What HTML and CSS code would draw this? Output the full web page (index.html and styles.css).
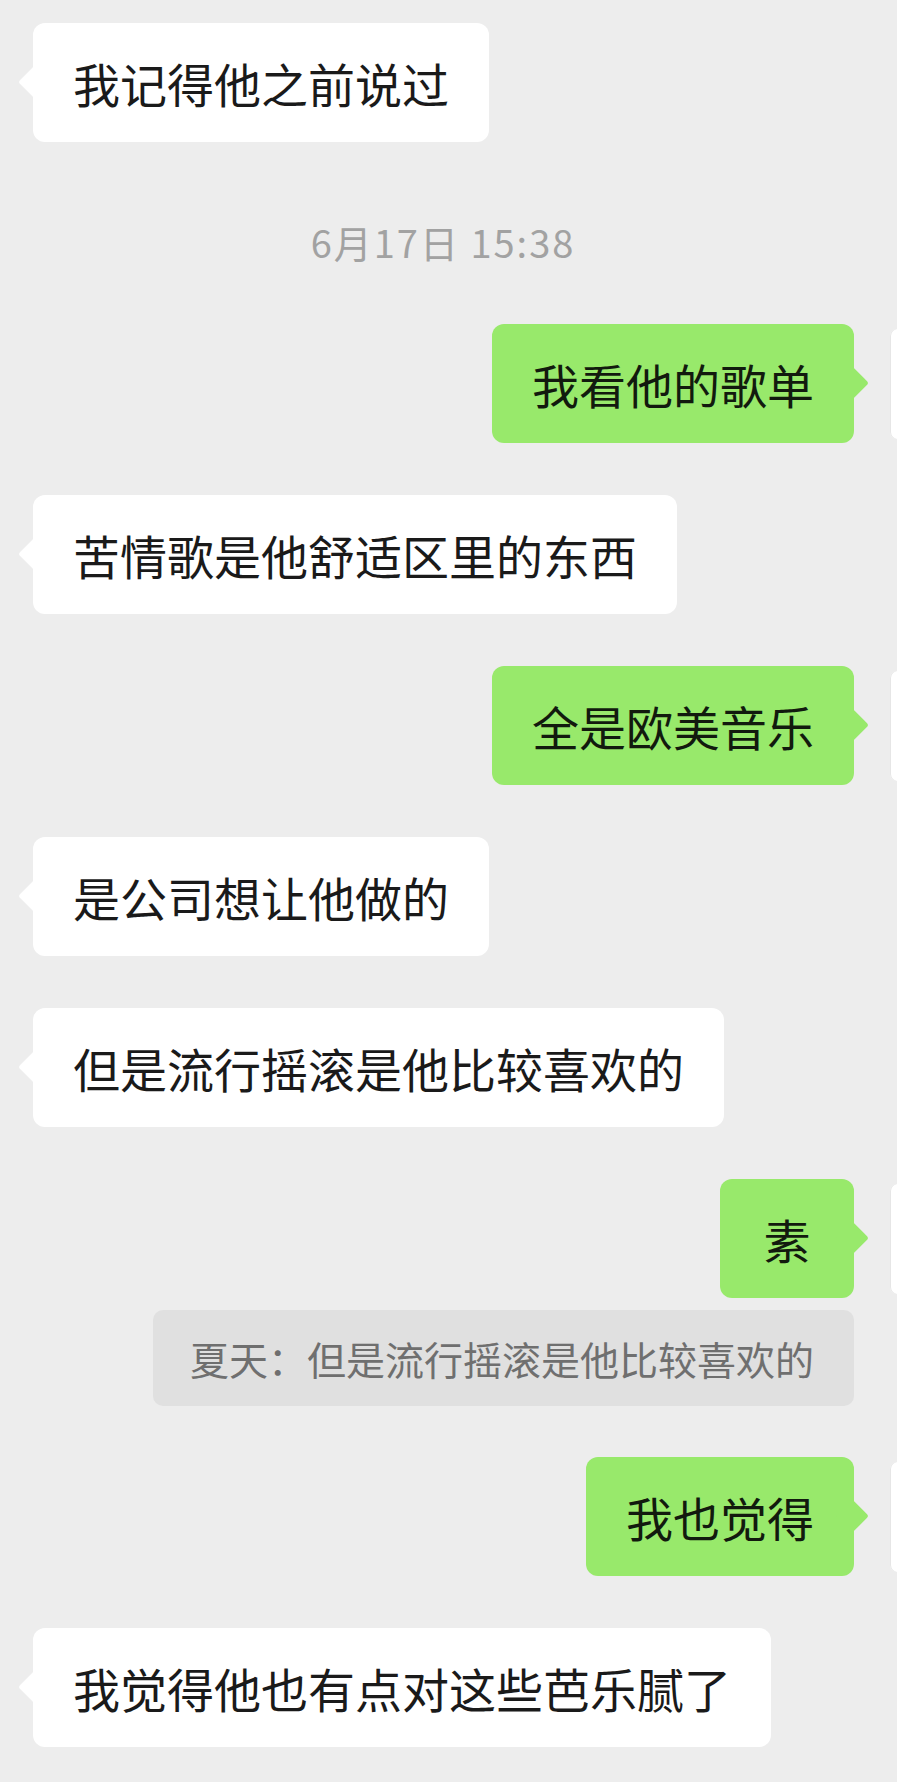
FILE: index.html
```html
<!DOCTYPE html>
<html lang="zh-CN">
<head>
  <meta charset="UTF-8">
  <meta name="viewport" content="width=device-width, initial-scale=1.0">
  <title>聊天记录</title>
  <link rel="stylesheet" href="styles.css">
</head>
<body>

  <div class="chat">
    <div class="row other">
      <div class="bubble">我记得他之前说过</div>
    </div>

    <div class="time">6月17日 15:38</div>

    <div class="row me">
      <div class="bubble">我看他的歌单</div>
      <div class="avatar"></div>
    </div>

    <div class="row other">
      <div class="bubble">苦情歌是他舒适区里的东西</div>
    </div>

    <div class="row me">
      <div class="bubble">全是欧美音乐</div>
      <div class="avatar"></div>
    </div>

    <div class="row other">
      <div class="bubble">是公司想让他做的</div>
    </div>

    <div class="row other">
      <div class="bubble">但是流行摇滚是他比较喜欢的</div>
    </div>

    <div class="row me">
      <div class="bubble">素</div>
      <div class="avatar"></div>
    </div>

    <div class="quote-row">
      <div class="quote">夏天：但是流行摇滚是他比较喜欢的</div>
    </div>

    <div class="row me">
      <div class="bubble">我也觉得</div>
      <div class="avatar"></div>
    </div>

    <div class="row other">
      <div class="bubble">我觉得他也有点对这些芭乐腻了</div>
    </div>
  </div>

</body>
</html>
```

FILE: styles.css
```css
body {
  margin: 0;
  padding: 0;
  background-color: #ededed;
  font-family: "Noto Sans CJK SC", "Noto Sans", sans-serif;
  overflow: hidden;
}
.chat {
  display: flex;
  flex-direction: column;
  padding-top: 23px;
}
.row {
  display: flex;
  align-items: center;
  margin-top: 52px;
}
.row:first-child {
  margin-top: 0;
}
.row.other {
  justify-content: flex-start;
  padding-left: 33px;
}
.row.me {
  justify-content: flex-end;
  gap: 36px;
}
.bubble {
  position: relative;
  min-width: 54px;
  font-size: 47px;
  line-height: 57px;
  padding: 31px 40px;
  border-radius: 12px;
  background-color: #ffffff;
  color: #1a1a1a;
  text-align: center;
  white-space: nowrap;
}
.bubble::before {
  content: "";
  position: absolute;
  top: 47px;
  width: 24px;
  height: 24px;
  border-radius: 3px;
  background-color: inherit;
  transform: rotate(45deg);
}
.other .bubble::before {
  left: -10px;
}
.me .bubble {
  background-color: #98e96b;
  color: #121a0e;
}
.me .bubble::before {
  right: -10px;
}
/* only the left edge of the avatar is inside the frame */
.avatar {
  width: 7px;
  height: 110px;
  flex-shrink: 0;
  border-radius: 8px 0 0 8px;
  background-color: #ffffff;
  box-shadow: inset 1px 0 0 #e6e6e6;
}
.time {
  margin-top: 75px;
  padding-right: 11px;
  text-align: center;
  font-size: 38px;
  line-height: 50px;
  letter-spacing: 2px;
  color: #a2a2a2;
}
.time + .row {
  margin-top: 57px;
}
.quote-row {
  display: flex;
  justify-content: flex-end;
  padding-right: 43px;
  margin-top: 12px;
}
.quote {
  font-size: 39px;
  line-height: 50px;
  padding: 23px 40px 23px 37px;
  border-radius: 10px;
  background-color: #e0e0e0;
  color: #6f6f6f;
  white-space: nowrap;
}
.quote-row + .row {
  margin-top: 51px;
}
```
